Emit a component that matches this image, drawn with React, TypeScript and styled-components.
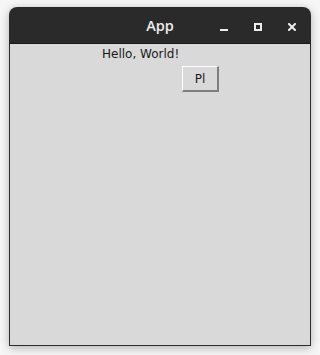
import React from "react";
import styled, { createGlobalStyle } from "styled-components";

const Global = createGlobalStyle`
  html, body { margin: 0; padding: 0; background: #f6f6f6; }
  body { width: 320px; height: 355px; overflow: hidden; }
`;

const Page = styled.div`
  padding: 7px 9px 0 9px;
  width: 302px;
`;

const Window = styled.div`
  width: 302px;
  height: 339px;
  display: flex;
  flex-direction: column;
  border-radius: 8px 8px 0 0;
  box-shadow: 0 2px 10px rgba(0, 0, 0, 0.28);
`;

const TitleBar = styled.div`
  height: 36px;
  background: #2a2a2a;
  border-radius: 8px 8px 0 0;
  border-bottom: 1px solid #1a1a1a;
  display: grid;
  grid-template-columns: 1fr auto 1fr;
  align-items: center;
  color: #ececec;
  font-family: "Open Sans", "Noto Sans", sans-serif;
  font-weight: 600;
  font-size: 14.5px;
`;

const Title = styled.div`
  grid-column: 2;
  padding-top: 1px;
`;

const Controls = styled.div`
  grid-column: 3;
  display: flex;
  justify-content: flex-end;
  align-items: center;
  gap: 26px;
  padding-right: 15px;
  padding-top: 3px;
`;

const Ctl = styled.svg`
  width: 8px;
  height: 8px;
  display: block;
`;

const Content = styled.div`
  flex: 1;
  background: #d9d9d9;
  border: 1px solid #2c2c2c;
  border-top: none;
  display: grid;
  grid-template-columns: 92px 80px 37px;
  grid-template-rows: 22px 26px;
  align-content: start;
  font-family: "DejaVu Sans", sans-serif;
  font-size: 12px;
  color: #1a1a1a;
`;

const Label = styled.div`
  grid-column: 2;
  grid-row: 1;
  padding-top: 3px;
  line-height: 14px;
  white-space: nowrap;
`;

const Button = styled.button`
  grid-column: 3;
  grid-row: 2;
  margin: 0;
  padding: 0;
  background: #d9d9d9;
  border-style: solid;
  border-width: 1px 2px 2px 1px;
  border-color: #ffffff #7e7e7e #7e7e7e #ffffff;
  font-family: "DejaVu Sans", sans-serif;
  font-size: 12px;
  color: #1a1a1a;
  display: flex;
  align-items: center;
  justify-content: center;
`;

export default function App() {
  return (
    <>
      <Global />
      <Page>
        <Window>
          <TitleBar>
            <Title>App</Title>
            <Controls>
              <Ctl viewBox="0 0 8 8">
                <rect x="0" y="6" width="8" height="2" fill="#ececec" />
              </Ctl>
              <Ctl viewBox="0 0 8 8">
                <rect x="1" y="1" width="6" height="6" fill="none" stroke="#ececec" strokeWidth="2" />
              </Ctl>
              <Ctl viewBox="0 0 8 8">
                <path d="M1 1 L7 7 M7 1 L1 7" stroke="#ececec" strokeWidth="2" strokeLinecap="square" />
              </Ctl>
            </Controls>
          </TitleBar>
          <Content>
            <Label>Hello, World!</Label>
            <Button>Pl</Button>
          </Content>
        </Window>
      </Page>
    </>
  );
}
